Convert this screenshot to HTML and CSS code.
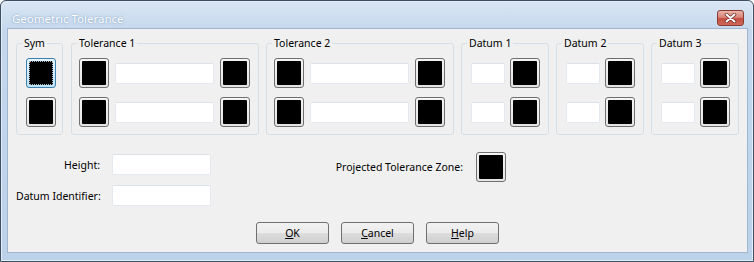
FILE: index.html
```html
<!DOCTYPE html>
<html lang="en">
<head>
    <meta charset="UTF-8">
    <title>Geometric Tolerance</title>
    <link rel="stylesheet" href="styles.css">
</head>
<body>
    <div class="window">
        <div class="titlebar">
            <span class="title">Geometric Tolerance</span>
            <span class="close">
                <svg width="13" height="10" viewBox="0 0 13 10">
                    <path d="M2.5 1.5 L10.5 8.5 M10.5 1.5 L2.5 8.5" stroke="#6b2a22" stroke-width="3.4" stroke-linecap="round"/>
                    <path d="M2.5 1.5 L10.5 8.5 M10.5 1.5 L2.5 8.5" stroke="#fff" stroke-width="2" stroke-linecap="round"/>
                </svg>
            </span>
        </div>
        <div class="client">
            <div class="groups">
                <fieldset class="group sym">
                    <legend>Sym</legend>
                    <div class="rows">
                        <div class="row"><button class="sq focus"><span></span></button></div>
                        <div class="row"><button class="sq"><span></span></button></div>
                    </div>
                </fieldset>
                <fieldset class="group tol">
                    <legend>Tolerance 1</legend>
                    <div class="rows">
                        <div class="row"><button class="sq"><span></span></button><input class="field wide" type="text"><button class="sq"><span></span></button></div>
                        <div class="row"><button class="sq"><span></span></button><input class="field wide" type="text"><button class="sq"><span></span></button></div>
                    </div>
                </fieldset>
                <fieldset class="group tol">
                    <legend>Tolerance 2</legend>
                    <div class="rows">
                        <div class="row"><button class="sq"><span></span></button><input class="field wide" type="text"><button class="sq"><span></span></button></div>
                        <div class="row"><button class="sq"><span></span></button><input class="field wide" type="text"><button class="sq"><span></span></button></div>
                    </div>
                </fieldset>
                <fieldset class="group datum">
                    <legend>Datum 1</legend>
                    <div class="rows">
                        <div class="row"><input class="field small" type="text"><button class="sq"><span></span></button></div>
                        <div class="row"><input class="field small" type="text"><button class="sq"><span></span></button></div>
                    </div>
                </fieldset>
                <fieldset class="group datum">
                    <legend>Datum 2</legend>
                    <div class="rows">
                        <div class="row"><input class="field small" type="text"><button class="sq"><span></span></button></div>
                        <div class="row"><input class="field small" type="text"><button class="sq"><span></span></button></div>
                    </div>
                </fieldset>
                <fieldset class="group datum">
                    <legend>Datum 3</legend>
                    <div class="rows">
                        <div class="row"><input class="field small" type="text"><button class="sq"><span></span></button></div>
                        <div class="row"><input class="field small" type="text"><button class="sq"><span></span></button></div>
                    </div>
                </fieldset>
            </div>

            <div class="lower">
                <div class="fields">
                    <label>Height:</label>
                    <input class="field long" type="text">
                    <label>Datum Identifier:</label>
                    <input class="field long" type="text">
                </div>
                <div class="projected">
                    <label>Projected Tolerance Zone:</label>
                    <button class="sq"><span></span></button>
                </div>
            </div>

            <div class="actions">
                <button class="push"><u>O</u>K</button>
                <button class="push"><u>C</u>ancel</button>
                <button class="push"><u>H</u>elp</button>
            </div>
        </div>
    </div>
</body>
</html>
```

FILE: styles.css
```css
* {
    margin: 0;
    padding: 0;
    box-sizing: border-box;
    font-family: 'Noto Sans', sans-serif;
}

body {
    background: #fff;
    color: #000;
    font-size: 10.5px;
}

.window {
    width: 754px;
    height: 262px;
    border: 1px solid #3d4e60;
    border-radius: 6px 6px 0 0;
    background: linear-gradient(#dae6f4, #c4d7ed 30px, #bcd2ea);
    display: flex;
    flex-direction: column;
    padding-bottom: 8px;
    box-shadow: inset 0 0 0 1px #e4eef8;
}

.titlebar {
    height: 27px;
    padding: 7px 9px 0 11px;
    display: flex;
    align-items: center;
}

.title {
    color: #fff;
    font-size: 11.5px;
    text-shadow: 0 0 3px #93aecd, 0 0 1px #7f9dbf;
}

.close {
    margin-left: auto;
    width: 27px;
    height: 16px;
    border: 1px solid #8b3b31;
    border-radius: 3px;
    background: linear-gradient(#e9b3a8, #d8847a 45%, #c24d3f 55%, #d06a5b);
    display: flex;
    justify-content: center;
    align-items: center;
}

.client {
    flex: 1;
    margin: 0 5px 0 6px;
    border: 1px solid #9fb6ce;
    background: #f0f0f0;
    padding: 7px 8px 0 8px;
}

.groups {
    display: flex;
    gap: 7px;
}

.group {
    border: 1px solid #d5dfe5;
    border-radius: 3px;
    padding: 7px 0 7px 0;
}

.group legend {
    margin-left: 5px;
    padding: 0 2px;
    line-height: 15px;
}

.sym {
    width: 48px;
    margin-right: 1px;
}

.tol {
    width: 187px;
}

.datum {
    width: 88px;
}

.rows {
    display: flex;
    flex-direction: column;
    gap: 9px;
}

.row {
    display: flex;
    align-items: center;
    height: 30px;
}

.sym .row {
    justify-content: center;
    padding-left: 2px;
}

.tol .row {
    padding: 0 8px 0 7px;
    gap: 6px;
}

.datum .row {
    padding: 0 8px 0 9px;
    gap: 5px;
}

.sq {
    width: 30px;
    height: 30px;
    border: 1px solid #707070;
    border-radius: 3px;
    padding: 2px;
    background: linear-gradient(#f4f4f4, #e4e4e4);
    display: flex;
    flex-shrink: 0;
}

.sq span {
    flex: 1;
    background: #000;
    border-radius: 1px;
}

.sq.focus {
    border-color: #3c7fb1;
    background: linear-gradient(#e5f4fc, #bfe3f7);
}

.sq.focus span {
    border: 1px dotted #9fb8c8;
}

.field {
    height: 21px;
    border: 1px solid #e3e9ef;
    border-top-color: #dde2e8;
    border-radius: 2px;
    background: #fff;
    outline: none;
}

.wide {
    width: 99px;
}

.small {
    width: 34px;
}

.long {
    width: 99px;
}

.lower {
    display: flex;
    align-items: flex-start;
    margin-top: 19px;
}

.fields {
    display: grid;
    grid-template-columns: 84px 99px;
    column-gap: 12px;
    row-gap: 10px;
    align-items: center;
}

.fields label {
    text-align: right;
    white-space: nowrap;
}

.projected {
    width: 295px;
    height: 31px;
    margin-top: -3px;
    display: flex;
    align-items: center;
    justify-content: flex-end;
    gap: 13px;
    white-space: nowrap;
}

.actions {
    display: flex;
    justify-content: center;
    gap: 12px;
    margin-top: 16px;
}

.push {
    width: 73px;
    height: 22px;
    border: 1px solid #707070;
    border-radius: 3px;
    background: linear-gradient(#f2f2f2, #ebebeb 50%, #dddddd 50%, #cfcfcf);
    font-size: 10.5px;
    color: #000;
}
```
